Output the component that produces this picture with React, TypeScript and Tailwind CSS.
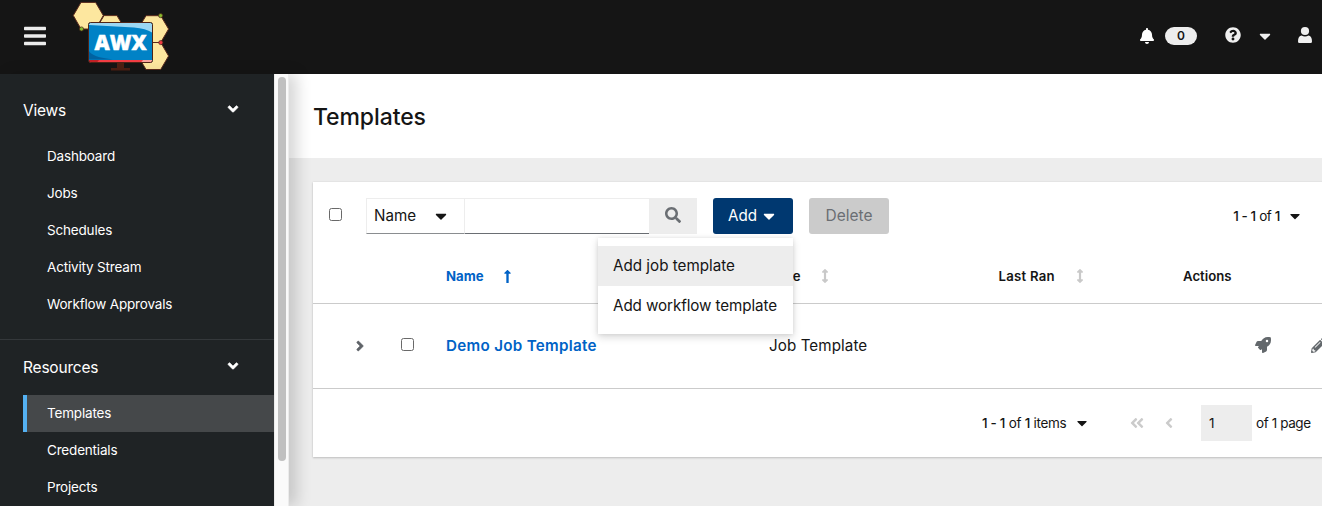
import type { ReactNode } from "react";
import {
  FaAngleDoubleLeft,
  FaAngleDown,
  FaAngleLeft,
  FaAngleRight,
  FaArrowsAltV,
  FaBell,
  FaCaretDown,
  FaLongArrowAltUp,
  FaPencilAlt,
  FaQuestionCircle,
  FaRocket,
  FaSearch,
} from "react-icons/fa";

function Logo() {
  return (
    <svg width="100" height="72" viewBox="72 0 100 72" className="shrink-0" aria-label="AWX">
      <g fill="#fde79f" stroke="#5a2a1c" strokeWidth="1">
        <path d="M99 24 104 15.6H117L122 24 116 34H104Z" />
        <path d="M73.3 15.5 81 2.4H95.6L103.3 15.5 95.6 29H81Z" />
        <path d="M138 29 146 15.7H160.7L168.6 29 160.7 42.5H146Z" />
        <path d="M138 56 146 42.5H160.7L168.6 56 160.7 69.5H146Z" />
      </g>
      <path d="M152 42.5H161" stroke="#5a2a1c" />
      <g stroke="#4a2417" strokeWidth=".7">
        <circle cx="81.5" cy="29" r="2.1" fill="#86b82c" />
        <circle cx="160.6" cy="15.6" r="2.1" fill="#86b82c" />
        <circle cx="160.8" cy="42.6" r="2.1" fill="#ee3a43" />
      </g>
      <path d="M117 62H124V68H130V70.5H111V68H117Z" fill="#4e2013" />
      <rect x="88.5" y="22.5" width="64" height="40" rx="2" fill="#0082c6" />
      <path d="M89 51Q92 57 113 59.5H89Z" fill="#0062a1" />
      <path d="M89 24.5Q89 23 90.5 23H150.5Q152 23 152 24.5V32.5Q146 28.5 134 27.5L89 25Z" fill="#9bd7f3" />
      <path d="M89 60H152V61Q152 62.5 150.5 62.5H90.5Q89 62.5 89 61Z" fill="#f23e45" />
      <path d="M89 60H99L97 62.5H90.5Q89 62.5 89 61Z" fill="#c22127" />
      <path d="M143 60H152V61Q152 62.5 150.5 62.5H141Z" fill="#f9a3a0" />
      <rect x="88.5" y="22.5" width="64" height="40" rx="2" fill="none" stroke="#4e2417" />
      <text
        x="120.5"
        y="50.2"
        textAnchor="middle"
        textLength="52"
        lengthAdjust="spacingAndGlyphs"
        fontFamily="Open Sans"
        fontWeight="800"
        fontSize="21.5"
        fill="#fff"
        stroke="#fff"
        strokeWidth=".5"
      >
        AWX
      </text>
    </svg>
  );
}

function Header() {
  return (
    <header className="flex h-[74px] shrink-0 items-start bg-[#151515] text-[#f0f0f0]">
      <svg width="22" height="20" viewBox="0 0 22 20" className="mt-[26px] ml-6 mr-[26px] shrink-0" fill="#ececec">
        <rect y=".8" width="22" height="3.4" rx=".8" />
        <rect y="8.3" width="22" height="3.4" rx=".8" />
        <rect y="15.8" width="22" height="3.4" rx=".8" />
      </svg>
      <Logo />
      <div className="ml-auto flex h-[72px] items-center">
        <FaBell className="mr-[10px] size-4 text-white" />
        <span className="mr-7 flex h-[18px] w-8 items-center justify-center rounded-full bg-[#ededed] text-[12px] font-semibold text-[#151515]">
          0
        </span>
        <FaQuestionCircle className="mr-[15px] mb-0.5 size-4" />
        <FaCaretDown className="mr-[23px] size-[18px]" />
        <svg width="16" height="18" viewBox="0 0 16 18" fill="currentColor" className="mr-[9px] mb-0.5">
          <circle cx="8" cy="5" r="4.1" />
          <path d="M1 15.5C1 11.8 2.3 9.8 4.5 9.6Q8 11.4 11.5 9.6C13.7 9.8 15 11.8 15 15.5Q15 17 13.6 17H2.4Q1 17 1 15.5Z" />
        </svg>
      </div>
    </header>
  );
}

function NavSection({ title, children }: { title: string; children: ReactNode }) {
  return (
    <section>
      <div className="flex h-[55px] items-center justify-between pr-[33px] pl-[23px] text-[15.5px] tracking-[-0.2px]">
        {title}
        <FaAngleDown className="mb-[3px] size-4 stroke-white stroke-[18px]" />
      </div>
      <ul>{children}</ul>
    </section>
  );
}

function NavItem({ label, active = false }: { label: string; active?: boolean }) {
  return (
    <li
      className={
        active
          ? "ml-[23px] flex h-[37px] items-center border-l-4 border-[#54b1f2] bg-[#45484a] pl-5"
          : "ml-[23px] flex h-[37px] items-center border-l-4 border-transparent pl-5"
      }
    >
      <span className="text-[13.5px] tracking-[-0.18px]">{label}</span>
    </li>
  );
}

function Sidebar() {
  return (
    <div className="relative z-10 flex w-[289px] shrink-0 shadow-[8px_0_14px_rgba(3,3,3,0.16)]">
      <nav className="w-[274px] bg-[#1f2325] text-white">
        <div className="h-[266px] border-b border-[#34383b] pt-[9px]">
          <NavSection title="Views">
            <NavItem label="Dashboard" />
            <NavItem label="Jobs" />
            <NavItem label="Schedules" />
            <NavItem label="Activity Stream" />
            <NavItem label="Workflow Approvals" />
          </NavSection>
        </div>
        <NavSection title="Resources">
          <NavItem label="Templates" active />
          <NavItem label="Credentials" />
          <NavItem label="Projects" />
        </NavSection>
      </nav>
      <div className="w-[15px] border-r border-l border-[#ebebeb] bg-[#fafafa] pt-[3px] pl-[3px]">
        <div className="h-96 w-2 rounded-full bg-[#c0c0c0]" />
      </div>
    </div>
  );
}

function Box() {
  return <span className="size-[13px] shrink-0 rounded-[2.5px] border border-[#696969] bg-white" />;
}

function AddMenu() {
  return (
    <div className="absolute top-10 right-0 z-10 h-24 w-[195px] bg-white pt-2 text-[15.2px] text-[#151515] shadow-[0_3px_8px_rgba(3,3,3,0.16),0_0_4px_rgba(3,3,3,0.08)]">
      <div className="flex h-10 items-center bg-[#ededed] pl-[15px] whitespace-nowrap">Add job template</div>
      <div className="flex h-10 items-center pl-[15px] tracking-[-0.09px] whitespace-nowrap">Add workflow template</div>
    </div>
  );
}

function Toolbar() {
  return (
    <div className="flex h-[67px] items-start pt-4 pl-4">
      <div className="mt-[10px] mr-6 flex">
        <Box />
      </div>
      <div className="flex h-9 w-[99px] items-center border border-[#ededed] border-b-[#8a8d90] pl-[7px] text-[15.2px]">
        <span className="w-[58px]">Name</span>
        <FaCaretDown className="size-[18px]" />
      </div>
      <div className="h-9 w-[184px] border-t border-b border-t-[#ededed] border-b-[#6a6e73]" />
      <div className="flex h-9 w-12 items-center justify-center bg-[#ededed] text-[#6a6e73]">
        <FaSearch className="mb-0.5 size-4" />
      </div>
      <div className="relative ml-4">
        <div className="flex h-9 w-20 items-center rounded-[3px] bg-[#003870] pl-[15px] text-[15.2px] text-white">
          <span className="w-8">Add</span>
          <FaCaretDown className="size-[18px]" />
        </div>
        <AddMenu />
      </div>
      <div className="ml-4 flex h-9 w-20 items-center justify-center rounded-[3px] bg-[#cbcbcb] text-[15.5px] text-[#6a6e73]">
        Delete
      </div>
      <div className="ml-auto flex h-9 items-center gap-[7px] pr-[35px] text-[13.5px] tracking-[-0.42px]">
        <span>
          <span className="font-medium">1 - 1</span> of <span className="font-medium">1</span>
        </span>
        <FaCaretDown className="size-4" />
      </div>
    </div>
  );
}

function Sortable() {
  return <FaArrowsAltV className="size-[14px] text-[#c9c9c9]" />;
}

function Table() {
  return (
    <div>
      <div className="grid h-[55px] grid-cols-[133px_323px_229.5px_184.5px_1fr] items-center border-b border-[#cbcbcb] pt-px text-[13.2px] font-semibold">
        <span />
        <span className="flex items-center text-[#0062c6]">
          <span className="w-[54px] font-bold">Name</span>
          <FaLongArrowAltUp className="size-[15px]" />
        </span>
        <span className="flex items-center gap-[17px]">
          Type <Sortable />
        </span>
        <span className="flex items-center">
          <span className="w-[74px] tracking-[0.25px]">Last Ran</span>
          <Sortable />
        </span>
        <span>Actions</span>
      </div>
      <div className="grid h-[85px] grid-cols-[133px_323px_481px_1fr] items-center border-b border-[#cbcbcb] text-[15.2px]">
        <span className="flex items-center pl-[39px]">
          <FaAngleRight className="mr-[33px] size-4 stroke-[#5f6368] stroke-[16px] text-[#5f6368]" />
          <span className="mb-[3px] flex">
            <Box />
          </span>
        </span>
        <span className="font-semibold tracking-[0.29px] text-[#0062c6]">Demo Job Template</span>
        <span className="tracking-[0.08px]">Job Template</span>
        <span className="flex gap-10 text-[#63686c]">
          <FaRocket className="mb-0.5 ml-[5px] size-4 shrink-0" />
          <FaPencilAlt className="size-4 shrink-0" />
        </span>
      </div>
    </div>
  );
}

function Pagination() {
  return (
    <div className="flex h-[68px] items-center pl-[669px] text-[13.5px] whitespace-nowrap">
      <span className="w-[92px] tracking-[-0.3px]">
        <span className="font-medium">1 - 1</span> of <span className="font-medium">1</span> items
      </span>
      <FaCaretDown className="size-4" />
      <FaAngleDoubleLeft className="ml-[39px] size-4 text-[#cbcbcb]" />
      <FaAngleLeft className="ml-4 size-4 text-[#cbcbcb]" />
      <span className="ml-6 flex h-9 w-[51px] shrink-0 items-center bg-[#ededed] pl-2">1</span>
      <span className="ml-1 tracking-[-0.4px]">of 1 page</span>
    </div>
  );
}

export default function App() {
  return (
    <div className="flex h-[506px] w-[1322px] flex-col overflow-hidden bg-[#ededed] font-['Inter',sans-serif] text-[#151515]">
      <Header />
      <div className="flex min-h-0 flex-1">
        <Sidebar />
        <main className="min-w-0 flex-1">
          <div className="flex h-[84px] items-center bg-white pt-0.5 pl-6">
            <h1 className="text-[23px] font-medium tracking-[-0.1px]">Templates</h1>
          </div>
          <div className="overflow-hidden pt-6 pb-12 pl-6">
            <div className="-mr-4 h-[275px] bg-white shadow-[0_1px_2px_rgba(3,3,3,0.18),0_0_2px_rgba(3,3,3,0.08)]">
              <Toolbar />
              <Table />
              <Pagination />
            </div>
          </div>
        </main>
      </div>
    </div>
  );
}
